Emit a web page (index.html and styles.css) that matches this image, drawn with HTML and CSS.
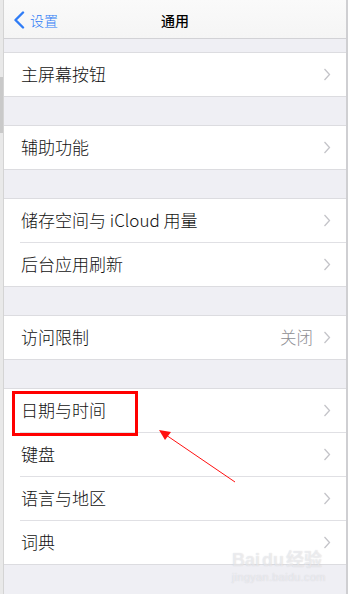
FILE: index.html
```html
<!DOCTYPE html>
<html lang="zh-CN">
<head>
<meta charset="utf-8">
<link rel="stylesheet" href="styles.css">
</head>
<body>
<div class="page">
  <div class="edge-left"><div class="edge-thumb"></div></div>
  <div class="screen">
    <header class="nav">
      <div class="back">
        <svg class="back-icon" width="12" height="18" viewBox="0 0 12 18"><path d="M10 1.5 L2.5 9 L10 16.5" fill="none" stroke="#2f7cf6" stroke-width="2.4" stroke-linecap="round" stroke-linejoin="round"/></svg>
        <span class="back-text">设置</span>
      </div>
      <div class="title">通用</div>
    </header>

    <section class="group">
      <div class="row"><span class="label">主屏幕按钮</span><svg class="chev" width="8" height="13" viewBox="0 0 8 13"><path d="M1.5 1 L6.5 6.5 L1.5 12" fill="none" stroke="#c4c4c9" stroke-width="1.3"/></svg></div>
    </section>

    <section class="group">
      <div class="row"><span class="label">辅助功能</span><svg class="chev" width="8" height="13" viewBox="0 0 8 13"><path d="M1.5 1 L6.5 6.5 L1.5 12" fill="none" stroke="#c4c4c9" stroke-width="1.3"/></svg></div>
    </section>

    <section class="group">
      <div class="row"><span class="label">储存空间与 iCloud 用量</span><svg class="chev" width="8" height="13" viewBox="0 0 8 13"><path d="M1.5 1 L6.5 6.5 L1.5 12" fill="none" stroke="#c4c4c9" stroke-width="1.3"/></svg></div>
      <div class="row"><span class="label">后台应用刷新</span><svg class="chev" width="8" height="13" viewBox="0 0 8 13"><path d="M1.5 1 L6.5 6.5 L1.5 12" fill="none" stroke="#c4c4c9" stroke-width="1.3"/></svg></div>
    </section>

    <section class="group">
      <div class="row"><span class="label">访问限制</span><span class="value">关闭</span><svg class="chev" width="8" height="13" viewBox="0 0 8 13"><path d="M1.5 1 L6.5 6.5 L1.5 12" fill="none" stroke="#c4c4c9" stroke-width="1.3"/></svg></div>
    </section>

    <section class="group">
      <div class="row"><span class="label">日期与时间</span><svg class="chev" width="8" height="13" viewBox="0 0 8 13"><path d="M1.5 1 L6.5 6.5 L1.5 12" fill="none" stroke="#c4c4c9" stroke-width="1.3"/></svg></div>
      <div class="row"><span class="label">键盘</span><svg class="chev" width="8" height="13" viewBox="0 0 8 13"><path d="M1.5 1 L6.5 6.5 L1.5 12" fill="none" stroke="#c4c4c9" stroke-width="1.3"/></svg></div>
      <div class="row"><span class="label">语言与地区</span><svg class="chev" width="8" height="13" viewBox="0 0 8 13"><path d="M1.5 1 L6.5 6.5 L1.5 12" fill="none" stroke="#c4c4c9" stroke-width="1.3"/></svg></div>
      <div class="row"><span class="label">词典</span><svg class="chev" width="8" height="13" viewBox="0 0 8 13"><path d="M1.5 1 L6.5 6.5 L1.5 12" fill="none" stroke="#c4c4c9" stroke-width="1.3"/></svg></div>
    </section>
  </div>
  <div class="edge-right"></div>

  <div class="highlight"></div>
  <svg class="arrow" width="348" height="594" viewBox="0 0 348 594">
    <line x1="235" y1="482" x2="166" y2="435" stroke="#ff1010" stroke-width="1"/>
    <polygon points="159,430 171,432 165,440" fill="#ff1010"/>
  </svg>

  <div class="watermark">
    <div class="wm-main">Bai<span class="wm-du">du</span>经验</div>
    <div class="wm-sub">jingyan.baidu.com</div>
  </div>
</div>
</body>
</html>
```

FILE: styles.css
```css
* { box-sizing: border-box; }
html, body { margin: 0; padding: 0; }
body {
  width: 348px;
  height: 594px;
  overflow: hidden;
  font-family: "Noto Sans CJK SC", "Noto Sans", sans-serif;
  background: #efeff4;
}
.page {
  position: relative;
  width: 348px;
  height: 594px;
  display: flex;
}
.edge-left {
  width: 4px;
  flex: none;
  background: #e9e9e9;
  border-right: 1px solid #d4d4d4;
  padding-top: 77px;
}
.edge-thumb {
  width: 3px;
  height: 56px;
  background: #c9c9c9;
}
.edge-right {
  width: 2px;
  flex: none;
  background: #cfcfd2;
}
.screen {
  flex: 1;
  display: flex;
  flex-direction: column;
  background: #efeff4;
}
.nav {
  height: 39px;
  flex: none;
  border-bottom: 1px solid #d2d2d6;
  background: linear-gradient(180deg, #fafafa 0%, #f5f5f5 100%);
  display: flex;
  align-items: center;
  justify-content: center;
  position: relative;
  margin-bottom: 13px;
}
.back {
  position: absolute;
  left: 9px;
  top: 11px;
  display: flex;
  align-items: center;
  gap: 5px;
  color: #2f7cf6;
  font-size: 14px;
  line-height: 18px;
  font-weight: 300;
}
.title {
  font-size: 14px;
  font-weight: 500;
  color: #000;
  padding-top: 1px;
}
.group {
  background: #fff;
  border-top: 1px solid #dcdce0;
  margin-bottom: 28px;
}
.row {
  height: 44px;
  display: flex;
  align-items: center;
  padding: 0 15px 0 17px;
  position: relative;
}
.row::after {
  content: "";
  position: absolute;
  left: 16px;
  right: 0;
  bottom: 0;
  height: 1px;
  background: #e0e0e4;
}
.row:last-child::after {
  left: 0;
  background: #dcdce0;
}
.label {
  flex: 1;
  font-size: 17px;
  font-weight: 300;
  color: #111;
  line-height: 20px;
  padding-bottom: 2px;
}
.value {
  font-size: 16.5px;
  font-weight: 300;
  color: #8e8e93;
  margin-right: 10px;
  padding-bottom: 2px;
}
.chev {
  flex: none;
  margin-bottom: 1px;
}
.highlight {
  position: absolute;
  left: 12px;
  top: 391px;
  width: 126px;
  height: 45px;
  border: 3px solid #ff0000;
}
.arrow {
  position: absolute;
  left: 0;
  top: 0;
  pointer-events: none;
}
.watermark {
  position: absolute;
  left: 232px;
  top: 549px;
  color: rgba(255, 255, 255, 0.5);
  text-shadow: 0 0 1px rgba(160, 160, 170, 0.45);
  font-family: "Liberation Sans", "Noto Sans CJK SC", sans-serif;
}
.wm-main {
  font-size: 18px;
  font-weight: bold;
  line-height: 22px;
}
.wm-du {
  margin: 0 2px;
}
.wm-sub {
  font-size: 11px;
  line-height: 12px;
  letter-spacing: 0.3px;
}
```
